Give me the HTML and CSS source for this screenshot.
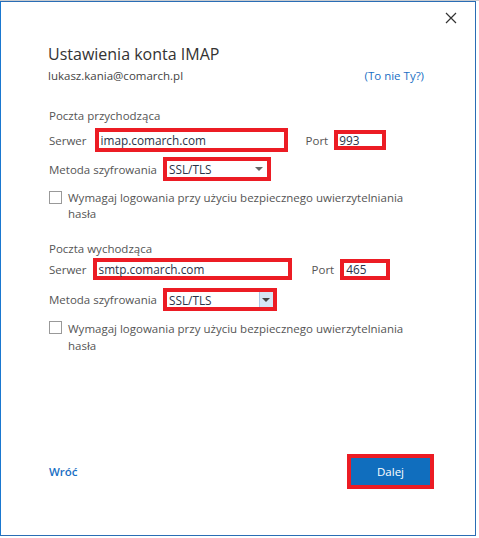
FILE: index.html
```html
<!DOCTYPE html>
<html lang="pl">
<head>
<meta charset="utf-8">
<title>Ustawienia konta IMAP</title>
<link rel="stylesheet" href="styles.css">
</head>
<body>
<div class="topstrip"></div>
<div class="window">
  <div class="titlebar">
    <span class="close" aria-label="Zamknij">
      <svg width="12" height="12" viewBox="0 0 12 12"><path d="M1 1 L11 11 M11 1 L1 11" stroke="#333" stroke-width="1.2" fill="none"/></svg>
    </span>
  </div>
  <div class="content">
    <h1 class="title">Ustawienia konta IMAP</h1>
    <div class="account">
      <span class="email">lukasz.kania@comarch.pl</span>
      <a class="link notyou">(To nie Ty?)</a>
    </div>

    <section class="group group-in">
      <div class="group-title">Poczta przychodząca</div>
      <div class="row row-srv">
        <span class="label">Serwer</span>
        <span class="hl server-in"><span class="field">imap.comarch.com</span></span>
        <span class="label port-label">Port</span>
        <span class="hl port-in"><span class="field">993</span></span>
      </div>
      <div class="row row-enc">
        <span class="label">Metoda szyfrowania</span>
        <span class="hl select-in"><span class="field select">SSL/TLS<span class="arrow"></span></span></span>
      </div>
      <div class="check">
        <span class="box"></span>
        <span class="check-text">Wymagaj logowania przy użyciu bezpiecznego uwierzytelniania hasła</span>
      </div>
    </section>

    <section class="group group-out">
      <div class="group-title">Poczta wychodząca</div>
      <div class="row row-srv">
        <span class="label">Serwer</span>
        <span class="hl server-out"><span class="field">smtp.comarch.com</span></span>
        <span class="label port-label2">Port</span>
        <span class="hl port-out"><span class="field">465</span></span>
      </div>
      <div class="row row-enc">
        <span class="label">Metoda szyfrowania</span>
        <span class="hl select-out"><span class="field select">SSL/TLS<span class="dropbtn"><span class="arrow"></span></span></span></span>
      </div>
      <div class="check">
        <span class="box"></span>
        <span class="check-text">Wymagaj logowania przy użyciu bezpiecznego uwierzytelniania hasła</span>
      </div>
    </section>

    <div class="footer">
      <a class="link back">Wróć</a>
      <span class="hl next-hl"><span class="next">Dalej</span></span>
    </div>
  </div>
</div>
</body>
</html>
```

FILE: styles.css
```css
* { box-sizing: border-box; }
html, body { margin: 0; padding: 0; background: #ffffff; }
body {
  width: 479px;
  height: 538px;
  overflow: hidden;
  font-family: "Open Sans", "Noto Sans", "Liberation Sans", sans-serif;
  font-size: 11.5px;
  color: #555;
}
.topstrip {
  height: 1px;
  background: #c9ccd0;
}
.window {
  width: 476px;
  height: 535px;
  border: 1px solid #2a6db5;
  border-left-color: #1a78d0;
  background: #fff;
  display: flex;
  flex-direction: column;
}
.titlebar {
  height: 30px;
  display: flex;
  justify-content: flex-end;
  padding: 10px 18px 0 0;
}
.close { width: 12px; height: 12px; display: block; }
.close svg { display: block; }
.content {
  padding: 0 0 0 47px;
  display: flex;
  flex-direction: column;
  flex: 1;
}
.title {
  margin: 11px 0 0 0;
  font-size: 16px;
  font-weight: 400;
  color: #333;
  line-height: 22px;
}
.account {
  display: flex;
  justify-content: space-between;
  width: 376px;
  margin-top: 3px;
  line-height: 16px;
}
.email { color: #444; }
.link { color: #1a6fc4; }
.group { display: flex; flex-direction: column; }
.group-in { margin-top: 24px; }
.group-out { margin-top: 19px; }
.group-title { line-height: 16px; color: #555; padding-left: 1px; }
.row { display: flex; align-items: center; padding-left: 1px; }
.label { color: #555; }
.hl {
  display: flex;
  border: 4px solid #ec1c24;
  background: #fff;
}
.field {
  display: flex;
  align-items: center;
  flex: 1;
  color: #2a3348;
  padding-left: 2px;
  line-height: 14px;
  font-size: 11.8px;
}
.group-in .row-srv { margin-top: 4px; }
.server-in { margin-left: 8px; width: 193px; height: 24px; }
.port-label { margin-left: 18px; }
.port-in { margin-left: 6px; width: 52px; height: 20px; }
.port-in .field { padding-left: 1px; }
.group-in .row-enc { margin-top: 5px; }
.select-in { margin-left: 6px; width: 108px; height: 24px; }
.select { position: relative; padding-left: 2px; }
.arrow {
  position: absolute;
  right: 4px;
  top: 50%;
  margin-top: -2px;
  width: 0; height: 0;
  border-left: 4px solid transparent;
  border-right: 4px solid transparent;
  border-top: 4px solid #666;
}
.check {
  display: flex;
  align-items: flex-start;
  margin-top: 9px;
  padding-left: 1px;
}
.box {
  width: 13px; height: 13px;
  border: 1px solid #999;
  flex: none;
  margin-top: 1px;
}
.check-text {
  margin-left: 6px;
  width: 350px;
  line-height: 16px;
}
.group-out .check-text { line-height: 17px; }
.group-out .check { margin-top: 9px; }
.group-out .row-srv { margin-top: 1px; }
.server-out { margin-left: 6px; width: 199px; height: 22px; }
.port-label2 { margin-left: 20px; }
.port-out { margin-left: 6px; width: 50px; height: 21px; }
.group-out .row-enc { margin-top: 8px; }
.select-out { margin-left: 6px; width: 114px; height: 23px; }
.dropbtn {
  position: absolute;
  right: 0; top: 0; bottom: 0;
  width: 14px;
  background: #d5e6f5;
  border-left: 1px solid #a9c8e6;
}
.dropbtn .arrow { right: 3px; border-top-color: #444; }
.footer {
  margin-top: auto;
  margin-bottom: 46px;
  display: flex;
  align-items: center;
  justify-content: space-between;
  width: 386px;
}
.back { font-weight: 600; padding-left: 1px; }
.next-hl { width: 87px; height: 35px; }
.next {
  flex: 1;
  background: #106ebe;
  color: #fff;
  display: flex;
  align-items: center;
  justify-content: center;
}
```
